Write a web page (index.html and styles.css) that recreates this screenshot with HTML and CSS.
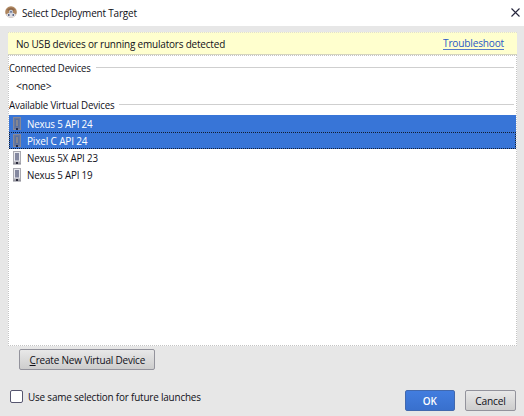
FILE: index.html
```
<!DOCTYPE html>
<html lang="en">
<head>
<meta charset="utf-8">
<title>Select Deployment Target</title>
<link rel="stylesheet" href="styles.css">
</head>
<body>
<svg width="0" height="0" class="defs">
  <symbol id="phone" viewBox="0 0 9 14">
    <rect width="8" height="13" fill="#a9a9b0"/>
    <rect x="1.5" y="1.5" width="5" height="8.5" fill="#8589a0" stroke="#e9e9ee"/>
    <path d="M0 13h8" stroke="#82828e"/>
    <rect x="3" y="11" width="2" height="2" fill="#28283a"/>
  </symbol>
  <symbol id="phone-selected" viewBox="0 0 9 14">
    <rect x=".5" y=".5" width="7" height="12" fill="#66779f" stroke="#878795"/>
    <rect x="2.5" y="2.5" width="3" height="7" fill="#85858f" stroke="#59719f"/>
    <rect x="3" y="11" width="2" height="2" fill="#202848"/>
  </symbol>
</svg>
<header class="titlebar">
  <svg class="app-icon" viewBox="0 0 12 12">
    <circle cx="6" cy="6" r="5.8" fill="#ae865f"/>
    <path d="M1 8.4Q6 4.5 11 8.4L9.5 11Q6 12.4 2.5 11Z" fill="#dedde2"/>
    <path d="M2 3.5Q6-.2 10 3.5L8.5 5 6 3.4 3.5 5Z" fill="#90694a"/>
    <circle cx="6" cy="5.7" r="2" fill="#c4cddd"/>
    <path d="M5 5.3h2v1.2H5zM3 8h1.5v2H3zM7.5 8H9v2H7.5z" fill="#5c6887"/>
  </svg>
  <h1 class="title"><span class="text">Select Deployment Target</span></h1>
  <svg class="close" viewBox="0 0 9 9"><path d="M.5.5l8 8M8.5.5l-8 8" stroke="#25253c" stroke-width="1.1"/></svg>
</header>
<main class="content">
  <div class="notice"><span class="text">No USB devices or running emulators detected</span><a class="link"><span class="text">Troubleshoot</span></a></div>
  <section class="list">
    <div class="group connected"><span class="text">Connected Devices</span></div>
    <div class="none"><span class="text">&lt;none&gt;</span></div>
    <div class="group available"><span class="text">Available Virtual Devices</span></div>
    <div class="row selected"><svg class="phone"><use href="#phone-selected"/></svg><span class="text">Nexus 5 API 24</span></div>
    <div class="row selected focused"><svg class="phone"><use href="#phone-selected"/></svg><span class="text">Pixel C API 24</span></div>
    <div class="row"><svg class="phone"><use href="#phone"/></svg><span class="text">Nexus 5X API 23</span></div>
    <div class="row"><svg class="phone"><use href="#phone"/></svg><span class="text">Nexus 5 API 19</span></div>
  </section>
  <button class="button create"><span class="text"><u>C</u>reate New Virtual Device</span></button>
</main>
<footer class="footer">
  <label class="remember"><i class="box"></i><span class="text">Use same selection for future launches</span></label>
  <button class="button ok"><span class="text">OK</span></button>
  <button class="button cancel"><span class="text">Cancel</span></button>
</footer>
</body>
</html>
```
FILE: styles.css
```
* { box-sizing: border-box; }
body {
  margin: 0;
  width: 524px;
  height: 416px;
  overflow: hidden;
  background: #e7e7e7;
  color: #101018;
  font: 11px/17px "Open Sans", "Noto Sans", sans-serif;
  letter-spacing: -0.2px;
  white-space: nowrap;
}
.defs { position: absolute; }
.text { display: inline-block; transform: scaleX(.905); transform-origin: left center; }
.titlebar {
  height: 26px;
  padding: 0 4px 1px 5px;
  display: flex;
  align-items: center;
  background: #fff;
}
.app-icon { width: 12px; height: 12px; margin: 0 5px 2px 0; }
.title { margin: 0; flex: 1; font-size: 11px; font-weight: 400; }
.close { width: 9px; height: 9px; margin-bottom: 1px; }
.content { padding: 6px 6px 0 8px; }
.notice {
  width: 509px;
  height: 23px;
  padding: 0 13px 0 8px;
  display: flex;
  align-items: center;
  justify-content: space-between;
  background: #ffffce;
  border-top: 1px dotted #deded4;
  border-bottom: 1px solid #d3d3be;
}
.link {
  width: 61px;
  height: 15px;
  margin-bottom: 2px;
  line-height: 15px;
  color: #2a58c6;
  border-bottom: 1px solid #5278c9;
}
.link .text { transform: scaleX(.92); }
.list {
  width: 509px;
  height: 291px;
  padding-top: 3px;
  background: #fff;
  border: 1px dotted #c4c4c4;
}
.group { height: 18px; display: flex; align-items: center; gap: 5px; }
.group::after { content: ""; flex: 1; height: 1px; margin-right: 2px; background: #cfcfcf; }
.connected { height: 17px; margin-bottom: 1px; }
.connected .text { width: 82px; transform: scaleX(.87); }
.available .text { width: 105px; transform: scaleX(.885); }
.none { height: 18px; padding-left: 7px; line-height: 17px; }
.none .text { transform: scaleX(.94); }
.available { margin-bottom: 2px; }
.row {
  height: 17px;
  padding-left: 4px;
  display: flex;
  align-items: center;
  gap: 4.5px;
}
.row .text { transform: scaleX(.89); }
.phone { width: 9px; height: 14px; }
.selected { background: #3875d7; color: #fff; }
.focused { border: 1px dotted #111c30; padding-left: 3px; }
.focused .text { transform: scaleX(.915); }
.button {
  padding: 0;
  height: 21px;
  border: 1px solid #93939c;
  border-radius: 2px;
  background: linear-gradient(#e8e8e8, #cdcdcd);
  color: #101018;
  font: inherit;
  letter-spacing: inherit;
}
.button .text { transform-origin: center; }
.create { display: block; width: 136px; margin: 3px 0 0 11px; }
.create .text { transform: translateX(.5px) scaleX(.905); }
.create u { text-underline-offset: 1px; }
.footer { display: flex; align-items: flex-start; padding: 20px 8px 0 10px; }
.remember { flex: 1; display: flex; align-items: center; gap: 5px; height: 13px; }
.remember .text { transform: scaleX(.9); }
.box { width: 13px; height: 13px; border: 1px solid #56566f; border-radius: 2px; background: #fff; }
.ok { width: 50px; background: linear-gradient(#427ddf, #3970cd); border-color: #4269ae; color: #fff; font-weight: 600; }
.cancel { width: 51px; margin-left: 10px; }
.cancel .text { transform: scaleX(.93); }
```
